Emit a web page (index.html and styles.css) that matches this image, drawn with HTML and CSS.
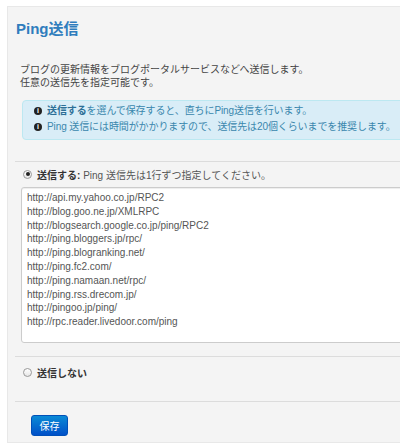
FILE: index.html
```html
<!DOCTYPE html>
<html lang="ja">
<head>
  <meta charset="UTF-8">
  <meta name="viewport" content="width=device-width, initial-scale=1.0">
  <title>Ping送信</title>
  <link rel="stylesheet" href="styles.css">
</head>
<body>
  <div class="panel">
    <h2 class="title">Ping送信</h2>
    <p class="lead">ブログの更新情報をブログポータルサービスなどへ送信します。<br>任意の送信先を指定可能です。</p>

    <div class="alert">
      <div class="alert-line"><span class="info-icon">i</span><strong>送信する</strong>を選んで保存すると、直ちにPing送信を行います。</div>
      <div class="alert-line"><span class="info-icon">i</span>Ping 送信には時間がかかりますので、送信先は20個くらいまでを推奨します。</div>
    </div>

    <div class="section">
      <label class="choice">
        <input type="radio" name="ping" checked>
        <strong>送信する:</strong>&nbsp;<span class="hint">Ping 送信先は1行ずつ指定してください。</span>
      </label>
      <textarea class="ping-list">http://api.my.yahoo.co.jp/RPC2
http://blog.goo.ne.jp/XMLRPC
http://blogsearch.google.co.jp/ping/RPC2
http://ping.bloggers.jp/rpc/
http://ping.blogranking.net/
http://ping.fc2.com/
http://ping.namaan.net/rpc/
http://ping.rss.drecom.jp/
http://pingoo.jp/ping/
http://rpc.reader.livedoor.com/ping</textarea>
    </div>

    <div class="section section-off">
      <label class="choice">
        <input type="radio" name="ping">
        <strong>送信しない</strong>
      </label>
    </div>

    <div class="section section-actions">
      <button type="button" class="btn-primary">保存</button>
    </div>
  </div>
</body>
</html>
```

FILE: styles.css
```css
/* Global Styles */
* {
  margin: 0;
  padding: 0;
  box-sizing: border-box;
}

body {
  font-family: "Liberation Sans", "Noto Sans CJK JP", sans-serif;
  font-size: 10px;
  background-color: #fff;
  color: #444;
  overflow: hidden;
}

.panel {
  width: 440px;
  margin: 6px 0 0 7px;
  padding: 12px 0 0 7px;
  background: #f4f4f4;
  border: 1px solid #e8e8e8;
}

.title {
  padding-left: 1px;
  font-size: 15px;
  line-height: 20px;
  font-weight: bold;
  color: #2f7dbd;
}

.lead {
  margin-top: 24px;
  padding-left: 5px;
  line-height: 13px;
  color: #444;
}

/* Info box */
.alert {
  margin: 11px 0 0 7px;
  padding: 2px 12px 4px 11px;
  background: #d9edf7;
  border: 1px solid #bce8f1;
  border-radius: 4px;
  color: #3a87ad;
  line-height: 16px;
  letter-spacing: -0.1px;
}

.alert-line {
  display: flex;
  align-items: center;
  white-space: nowrap;
}

.alert-line strong {
  font-weight: bold;
  color: #2d6f96;
}

.info-icon {
  width: 8px;
  height: 8px;
  margin-right: 5px;
  border-radius: 50%;
  background: #222;
  color: #fff;
  font-size: 7px;
  line-height: 8px;
  font-weight: bold;
  text-align: center;
  flex-shrink: 0;
}

/* Form sections */
.section {
  margin-top: 21px;
  padding: 5px 0 13px 6px;
  border-top: 1px solid #dcdcdc;
}

.section-off {
  margin-top: 0;
  padding: 8px 0 22px 6px;
}

.section-actions {
  margin-top: 0;
  padding: 13px 0 6px 16px;
}

.choice {
  display: flex;
  align-items: center;
  height: 14px;
  padding-left: 2px;
  color: #333;
}

.choice strong {
  font-weight: bold;
}

.hint {
  color: #555;
}

.choice input {
  appearance: none;
  width: 9px;
  height: 9px;
  margin-right: 5px;
  border: 1px solid #999;
  border-radius: 50%;
  background: linear-gradient(#fff, #e6e6e6);
  position: relative;
}

.choice input:checked::after {
  content: "";
  position: absolute;
  left: 1.5px;
  top: 1.5px;
  width: 4px;
  height: 4px;
  border-radius: 50%;
  background: #222;
}

.ping-list {
  display: block;
  width: 420px;
  height: 156px;
  margin-top: 6px;
  padding: 3px 5px;
  font-family: "Liberation Sans", "Noto Sans CJK JP", sans-serif;
  font-size: 10px;
  line-height: 13.8px;
  color: #555;
  background: #fff;
  border: 1px solid #ccc;
  border-radius: 3px;
  box-shadow: inset 0 1px 1px rgba(0, 0, 0, 0.075);
  resize: none;
  overflow: hidden;
}

.btn-primary {
  width: 37px;
  height: 21px;
  font-family: "Liberation Sans", "Noto Sans CJK JP", sans-serif;
  font-size: 10px;
  color: #fff;
  background: linear-gradient(#0a8ad6, #0050c8);
  border: 1px solid #0050b8;
  border-radius: 3px;
  cursor: pointer;
}
```
